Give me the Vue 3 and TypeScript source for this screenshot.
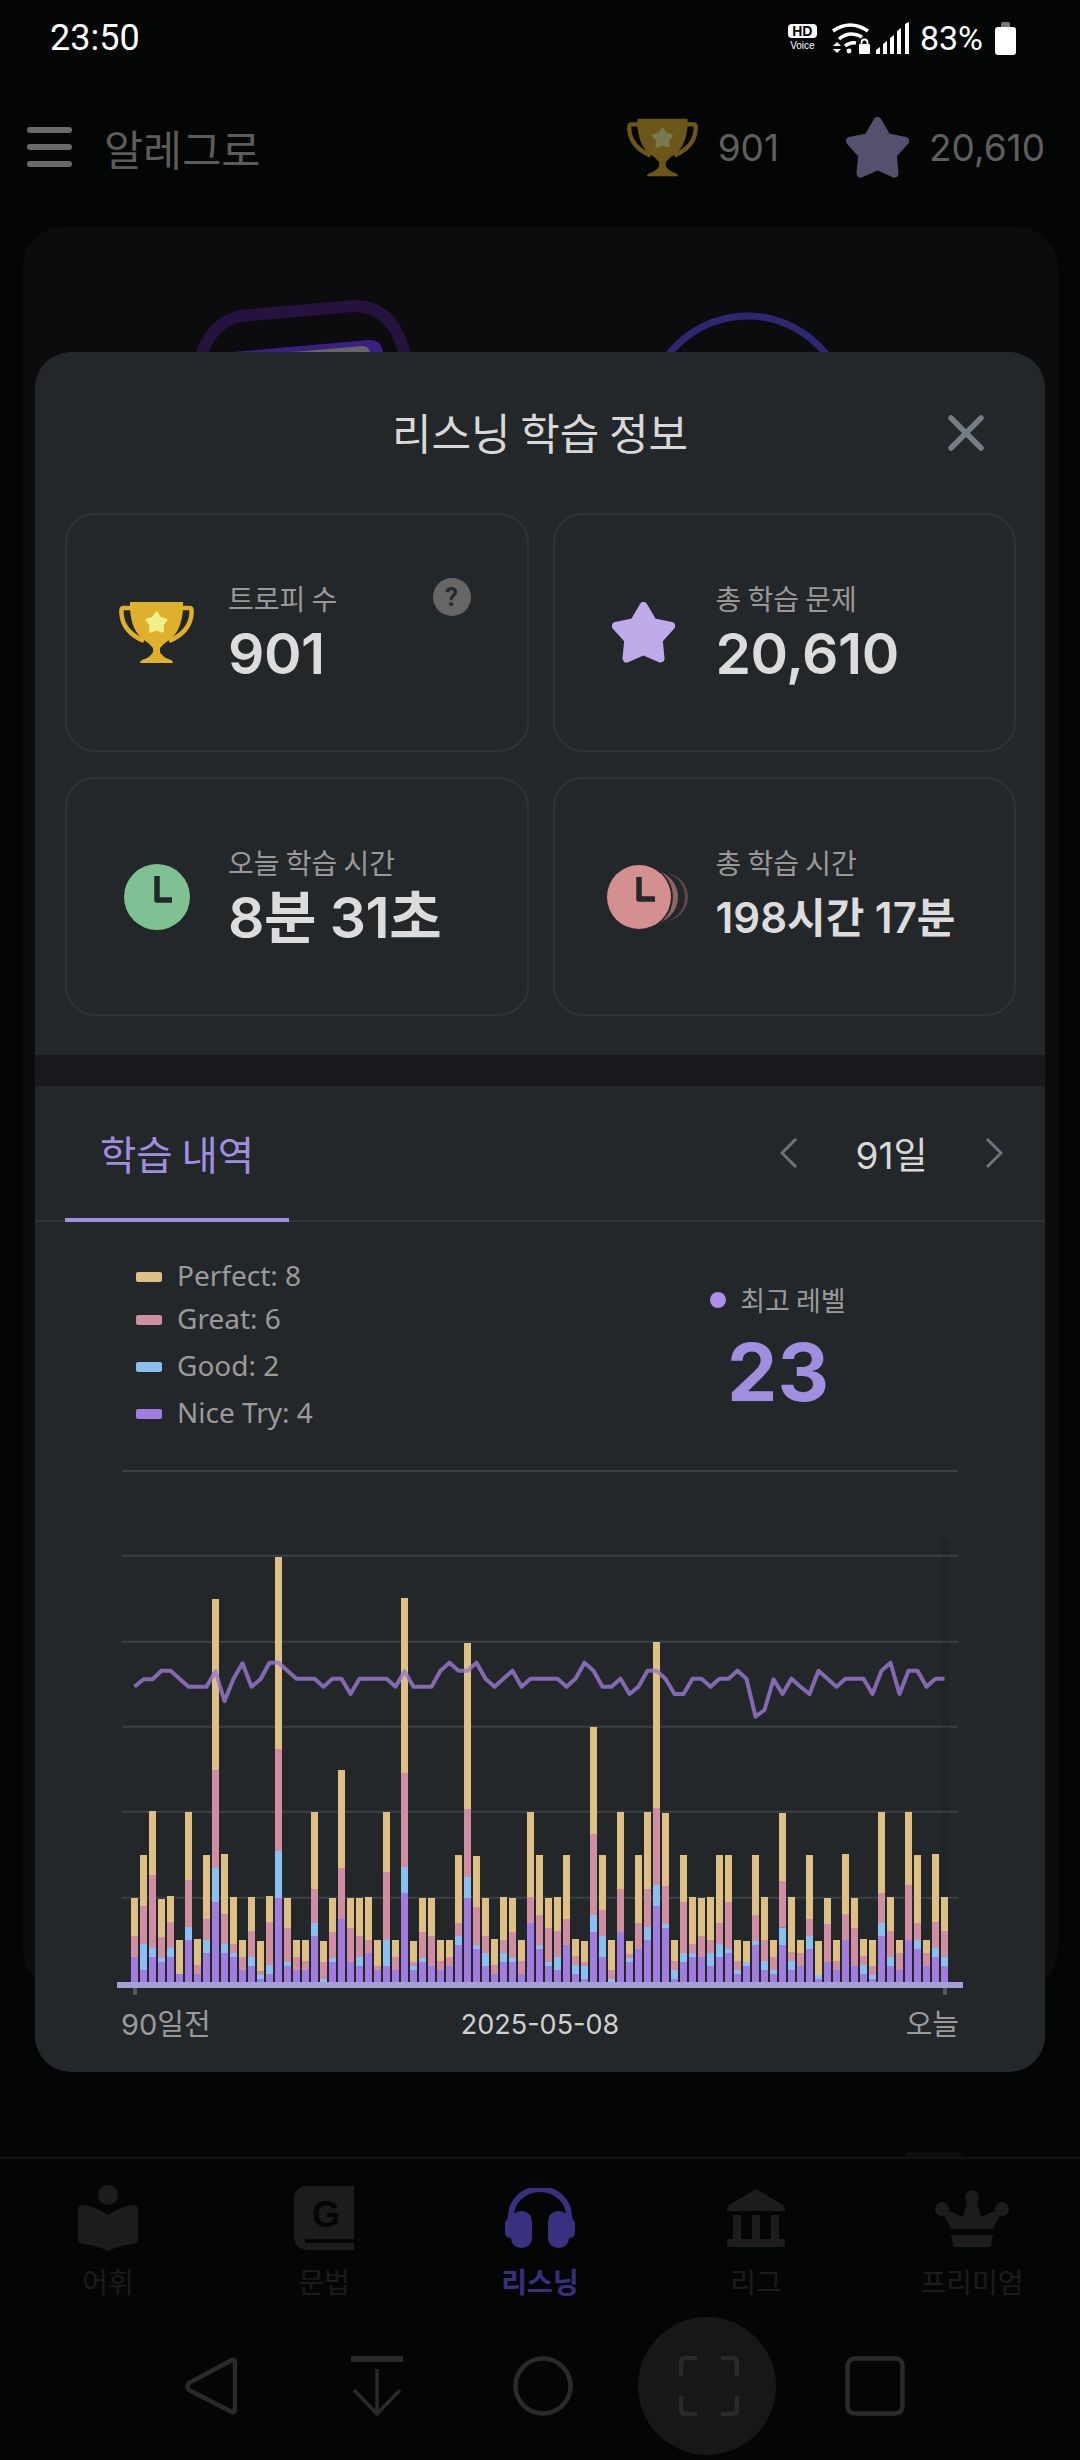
<script setup lang="ts">
interface Stat {
  label: string
  value: string
  icon: 'trophy' | 'star' | 'clock' | 'clocks'
  small?: boolean
  help?: boolean
}

const stats: Stat[] = [
  { label: '트로피 수', value: '901', icon: 'trophy', help: true },
  { label: '총 학습 문제', value: '20,610', icon: 'star' },
  { label: '오늘 학습 시간', value: '8분 31초', icon: 'clock' },
  { label: '총 학습 시간', value: '198시간 17분', icon: 'clocks', small: true },
]

const legend = [
  { name: 'Perfect: 8', color: '#dfc084' },
  { name: 'Great: 6', color: '#cf8ea2' },
  { name: 'Good: 2', color: '#8abff2' },
  { name: 'Nice Try: 4', color: '#a07ddf' },
]

const navItems = ['어휘', '문법', '리스닝', '리그', '프리미엄']

// stack tops per day, in 1/3 px from the top of the chart: yellow, pink, blue, purple
const days: number[][] = [
  [1074, 1188, 1251, 1251], [945, 1098, 1212, 1290], [813, 1005, 1224, 1251], [1077, 1191, 1254, 1266],
  [1068, 1146, 1224, 1251], [1200, 1302, 1302, 1302], [816, 1020, 1161, 1200], [1197, 1275, 1302, 1302],
  [945, 1137, 1200, 1239], [177, 690, 984, 1086], [942, 1122, 1212, 1239], [1071, 1212, 1239, 1251],
  [1200, 1251, 1290, 1290], [1071, 1173, 1251, 1278], [1203, 1293, 1305, 1317], [1068, 1146, 1275, 1302],
  [51, 627, 933, 1074], [1074, 1164, 1266, 1278], [1200, 1251, 1290, 1290], [1200, 1263, 1290, 1290],
  [816, 1047, 1149, 1188], [1203, 1266, 1317, 1326], [1074, 1176, 1254, 1266], [690, 984, 1137, 1137],
  [1074, 1164, 1266, 1266], [1074, 1188, 1251, 1278], [1071, 1200, 1239, 1239], [1200, 1278, 1290, 1290],
  [816, 996, 1200, 1278], [1200, 1251, 1290, 1290], [174, 699, 981, 1059], [1203, 1266, 1278, 1290],
  [1074, 1176, 1254, 1266], [1074, 1188, 1278, 1278], [1200, 1263, 1290, 1290], [1200, 1251, 1278, 1278],
  [945, 1149, 1188, 1215], [309, 807, 1011, 1074], [948, 1101, 1215, 1227], [1074, 1188, 1239, 1278],
  [1197, 1275, 1302, 1302], [1071, 1200, 1239, 1266], [1074, 1176, 1254, 1266], [1200, 1263, 1302, 1302],
  [816, 1071, 1149, 1149], [945, 1125, 1215, 1227], [1074, 1164, 1266, 1278], [1071, 1173, 1251, 1290],
  [945, 1137, 1215, 1215], [1197, 1248, 1275, 1302], [1203, 1266, 1278, 1317], [561, 882, 1125, 1176],
  [945, 1110, 1188, 1251], [1200, 1290, 1317, 1326], [816, 1047, 1176, 1176], [1203, 1242, 1254, 1266],
  [945, 1149, 1227, 1227], [816, 1047, 1161, 1200], [306, 804, 1035, 1098], [819, 1038, 1152, 1164],
  [1200, 1263, 1290, 1317], [945, 1086, 1239, 1266], [1071, 1212, 1239, 1251], [1074, 1188, 1251, 1251],
  [1071, 1200, 1239, 1278], [945, 1149, 1212, 1251], [945, 1086, 1227, 1239], [1200, 1263, 1290, 1302],
  [1203, 1266, 1266, 1278], [945, 1125, 1203, 1215], [1071, 1200, 1263, 1290], [1200, 1251, 1290, 1302],
  [819, 1023, 1163, 1215], [1071, 1236, 1263, 1290], [1200, 1239, 1278, 1278], [945, 1137, 1188, 1227],
  [1203, 1305, 1305, 1317], [1074, 1152, 1266, 1266], [1200, 1263, 1290, 1290], [942, 1122, 1200, 1200],
  [1074, 1164, 1278, 1278], [1197, 1248, 1275, 1302], [1200, 1278, 1305, 1317], [816, 1059, 1149, 1188],
  [1071, 1173, 1251, 1278], [1200, 1239, 1290, 1290], [816, 1035, 1200, 1200], [945, 1149, 1200, 1227],
  [1200, 1239, 1278, 1278], [942, 1146, 1224, 1251], [1071, 1173, 1251, 1278],
]

const levels = [
  440, 418, 418, 392, 392, 416, 440, 440, 440, 394, 484, 416, 370, 440, 418, 368, 368, 392, 416, 416, 416, 440, 416,
  416, 462, 416, 416, 416, 416, 440, 394, 440, 440, 440, 392, 368, 392, 392, 368, 416, 440, 416, 392, 440, 416, 416,
  416, 416, 440, 416, 368, 392, 440, 440, 416, 462, 440, 392, 392, 416, 462, 462, 416, 416, 440, 416, 416, 392, 416,
  530, 510, 418, 462, 416, 440, 462, 392, 416, 440, 416, 416, 416, 462, 392, 368, 462, 392, 392, 440, 416, 416,
]

const BASE = 1326
const stackColors = ['#dfc084', '#cf8ea2', '#8abff2', '#a07ddf']
const gridLines = [-69, 15.7, 101.7, 186.7, 271.7, 357.7]

const segments = days.flatMap((tops, i) =>
  tops.map((top, s) => {
    const bottom = s < 3 ? tops[s + 1] : BASE
    return { x: 96 + 9 * i, y: top / 3, h: (bottom - top) / 3, fill: stackColors[s] }
  }),
)

const levelLine = levels.map((v, i) => `${99.5 + 9 * i},${(v / 3).toFixed(1)}`).join(' ')

function starPoints(cx: number, cy: number, outer: number, inner: number): string {
  const pts: string[] = []
  for (let i = 0; i < 10; i++) {
    const r = i % 2 === 0 ? outer : inner
    const a = (Math.PI / 5) * i - Math.PI / 2
    pts.push(`${(cx + r * Math.cos(a)).toFixed(1)},${(cy + r * Math.sin(a)).toFixed(1)}`)
  }
  return pts.join(' ')
}

const bigStar = starPoints(31.5, 33, 29, 16)
const smallStar = starPoints(37.5, 21, 10, 5.8)
</script>

<template>
  <div class="page">
    <div class="status-bar">
      <span class="time">23:50</span>
      <div class="status-right">
        <div class="hd">
          <span class="hd-box">HD</span>
          <span class="hd-voice">Voice</span>
        </div>
        <svg class="wifi" width="40" height="32" viewBox="0 0 40 32">
          <path d="M2 9 Q19 -3 37 9" fill="none" stroke="#fff" stroke-width="3.5" />
          <path d="M8 17 Q19 8 31 15" fill="none" stroke="#fff" stroke-width="3.5" />
          <path d="M14 24 Q19 20 25 21" fill="none" stroke="#fff" stroke-width="3.5" />
          <circle cx="18" cy="29" r="2.4" fill="#fff" />
          <path d="M2 24 L6 20 L10 24 Z M2 27 H10 L6 31 Z" fill="#fff" />
          <rect x="28" y="22" width="11" height="10" rx="1" fill="#fff" />
          <path d="M30.5 23 V20.5 a3 3 0 0 1 6 0 V23" fill="none" stroke="#fff" stroke-width="1.8" />
        </svg>
        <svg class="signal" width="34" height="32" viewBox="0 0 34 32">
          <path d="M0 32 V28 L4 25 V32 Z M7 32 V22 L11 19 V32 Z M14 32 V16 L18 13 V32 Z M21 32 V9 L25 6 V32 Z M29 32 V2 L33 0 V32 Z" fill="#fff" />
        </svg>
        <span class="battery-text">83%</span>
        <div class="battery"><span class="battery-cap"></span><span class="battery-body"></span></div>
      </div>
    </div>

    <header class="app-header">
      <div class="burger"><span></span><span></span><span></span></div>
      <span class="app-title">알레그로</span>
      <div class="header-stats">
        <svg width="71" height="59" viewBox="0 0 75 61" class="dim-icon">
          <path d="M12 6 H4 Q2 6 2.5 12 Q4 30 25 39 M63 6 H71 Q73 6 72.5 12 Q71 30 50 39" fill="none" stroke="#6d561a" stroke-width="4.5" />
          <path d="M11 0 H64 V8 Q62 30 50 38 Q44 42 41 46 V50 Q43 55 52 58 Q54 59 54 61 H21 Q21 59 23 58 Q32 55 34 50 V46 Q31 42 25 38 Q13 30 11 8 Z" fill="#6d561a" />
          <polygon :points="smallStar" fill="#767a4c" stroke="#767a4c" stroke-width="3" stroke-linejoin="round" />
        </svg>
        <span class="header-num">901</span>
        <svg class="header-star" width="63" height="61" viewBox="0 0 63 61">
          <polygon :points="bigStar" fill="#56506f" stroke="#56506f" stroke-width="8" stroke-linejoin="round" />
        </svg>
        <span class="header-num">20,610</span>
      </div>
    </header>

    <div class="back-card">
      <svg class="back-art" width="1035" height="125" viewBox="0 0 1035 125">
        <path d="M178 128 Q190 95 217 89 L330 79 Q370 78 382 128" fill="none" stroke="#25123f" stroke-width="12" />
        <path d="M210 125 L345 113 Q358 112 360 125 Z" fill="#3a1f85" />
        <path d="M270 125 L340 119 Q345 119 347 125 Z" fill="#666" />
        <path d="M646 127 A100 100 0 0 1 803 127" fill="none" stroke="#2e2670" stroke-width="7" />
      </svg>
    </div>

    <nav class="bottom-nav">
      <span class="peek"></span>
      <div v-for="(name, i) in navItems" :key="name" class="nav-item" :class="{ active: i === 2 }">
        <div class="nav-icon">
          <svg v-if="i === 0" width="60" height="66" viewBox="0 0 60 66" fill="#1c1c1c">
            <circle cx="30" cy="10" r="10" />
            <path d="M4 20 Q14 20 30 30 Q46 20 56 20 Q60 20 60 24 V55 Q60 58 56 59 Q42 60 30 66 Q18 60 4 59 Q0 58 0 55 V24 Q0 20 4 20 Z" />
          </svg>
          <svg v-else-if="i === 1" width="60" height="64" viewBox="0 0 60 64">
            <path d="M14 0 H60 V64 H16 Q0 64 0 50 V14 Q0 0 14 0 Z" fill="#1c1c1c" />
            <path d="M11 55 H60" stroke="#050505" stroke-width="3.5" />
            <text x="32" y="41" text-anchor="middle" class="g-letter">G</text>
          </svg>
          <svg v-else-if="i === 2" width="70" height="60" viewBox="0 0 70 60" fill="#3a3080">
            <path d="M6 34 V28 A29 27 0 0 1 64 28 V34" fill="none" stroke="#3a3080" stroke-width="6" />
            <rect x="6" y="23" width="21" height="37" rx="10" />
            <rect x="43" y="23" width="21" height="37" rx="10" />
            <rect x="0" y="30" width="10" height="20" rx="5" />
            <rect x="60" y="30" width="10" height="20" rx="5" />
          </svg>
          <svg v-else-if="i === 3" width="58" height="58" viewBox="0 0 58 58" fill="#1c1c1c">
            <path d="M29 0 L56 16 Q58 18 58 20 V22 H0 V20 Q0 18 2 16 Z" />
            <rect x="6" y="26" width="8" height="24" />
            <rect x="25" y="26" width="8" height="24" />
            <rect x="44" y="26" width="8" height="24" />
            <rect x="0" y="50" width="58" height="8" rx="2" />
          </svg>
          <svg v-else width="74" height="58" viewBox="0 0 74 58" fill="#1c1c1c">
            <circle cx="37" cy="8" r="7" />
            <circle cx="7" cy="20" r="7" />
            <circle cx="67" cy="20" r="7" />
            <path d="M33 10 H41 L46 28 L60 22 L66 24 L58 40 H16 L8 24 L14 22 L28 28 Z" />
            <path d="M16 46 H58 L56 56 Q56 58 54 58 H20 Q18 58 18 56 Z" />
          </svg>
        </div>
        <span class="nav-label">{{ name }}</span>
      </div>
    </nav>

    <div class="system-nav">
      <div class="sys-item">
        <svg width="52" height="60" viewBox="0 0 52 60" fill="none" stroke="#2a2a2a" stroke-width="4.5" stroke-linejoin="round">
          <path d="M47 4 Q50 3 50 7 V53 Q50 57 47 56 L4 34 Q1 30 4 27 Z" />
        </svg>
      </div>
      <div class="sys-item">
        <svg width="52" height="60" viewBox="0 0 52 60" fill="none" stroke="#2a2a2a" stroke-width="3.5">
          <path d="M1 3 H51" stroke-width="6" stroke-linecap="round" />
          <path d="M26 13 V58 M3 34 L26 58 L49 34" />
        </svg>
      </div>
      <div class="sys-item">
        <svg width="60" height="60" viewBox="0 0 60 60" fill="none" stroke="#2a2a2a" stroke-width="4.5">
          <circle cx="30" cy="30" r="27.5" />
        </svg>
      </div>
      <div class="sys-item">
        <div class="capture">
          <svg width="60" height="60" viewBox="0 0 60 60" fill="none" stroke="#2a2a2a" stroke-width="4.5">
            <path d="M2 20 V7 Q2 2 7 2 H18 M42 2 H53 Q58 2 58 7 V20 M58 40 V53 Q58 58 53 58 H42 M18 58 H7 Q2 58 2 53 V40" />
          </svg>
        </div>
      </div>
      <div class="sys-item">
        <svg width="60" height="60" viewBox="0 0 60 60" fill="none" stroke="#2a2a2a" stroke-width="4.5">
          <rect x="2.5" y="2.5" width="55" height="55" rx="7" />
        </svg>
      </div>
    </div>

    <section class="modal">
      <div class="modal-head">
        <span></span>
        <h2 class="modal-title">리스닝 학습 정보</h2>
        <svg class="close" width="36" height="36" viewBox="0 0 36 36" stroke="#767d84" stroke-width="5.5" stroke-linecap="round">
          <path d="M3 3 L33 33 M33 3 L3 33" />
        </svg>
      </div>

      <div class="stat-grid">
        <div v-for="s in stats" :key="s.label" class="stat-card">
          <div class="stat-icon">
            <svg v-if="s.icon === 'trophy'" width="75" height="61" viewBox="0 0 75 61">
              <path d="M12 6 H4 Q2 6 2.5 12 Q4 30 25 39 M63 6 H71 Q73 6 72.5 12 Q71 30 50 39" fill="none" stroke="#deb02c" stroke-width="4.5" />
              <path d="M11 0 H64 V8 Q62 30 50 38 Q44 42 41 46 V50 Q43 55 52 58 Q54 59 54 61 H21 Q21 59 23 58 Q32 55 34 50 V46 Q31 42 25 38 Q13 30 11 8 Z" fill="#deb02c" />
              <polygon :points="smallStar" fill="#f3f08c" stroke="#f3f08c" stroke-width="3" stroke-linejoin="round" />
            </svg>
            <svg v-else-if="s.icon === 'star'" width="63" height="61" viewBox="0 0 63 61">
              <polygon :points="bigStar" fill="#bfaaea" stroke="#bfaaea" stroke-width="8" stroke-linejoin="round" />
            </svg>
            <svg v-else-if="s.icon === 'clock'" class="clock" width="66" height="66" viewBox="0 0 66 66">
              <circle cx="33" cy="33" r="33" fill="#7fc193" />
              <path d="M33 12 V36 H48" fill="none" stroke="#24272a" stroke-width="5.5" stroke-linejoin="round" />
            </svg>
            <svg v-else class="clocks" width="81" height="64" viewBox="0 0 81 64">
              <circle cx="57" cy="32" r="24" fill="#5f4748" />
              <circle cx="53" cy="32" r="25" fill="#24272a" />
              <circle cx="44" cy="32" r="27" fill="#8f6667" />
              <circle cx="33" cy="32" r="33" fill="#24272a" />
              <circle cx="32" cy="32" r="32" fill="#d48f90" />
              <path d="M32 12 V34 H48" fill="none" stroke="#24272a" stroke-width="5.5" stroke-linejoin="round" />
            </svg>
          </div>
          <div class="stat-text">
            <div class="stat-label">{{ s.label }}</div>
            <div class="stat-value" :class="{ small: s.small }">{{ s.value }}</div>
          </div>
          <span v-if="s.help" class="help">?</span>
        </div>
      </div>

      <div class="band"></div>

      <div class="tabs">
        <div class="tab">학습 내역</div>
        <div class="range">
          <svg width="18" height="30" viewBox="0 0 18 30" fill="none" stroke="#6b747c" stroke-width="3"><path d="M16 1 L2 15 L16 29" /></svg>
          <span class="range-text">91일</span>
          <svg width="18" height="30" viewBox="0 0 18 30" fill="none" stroke="#6b747c" stroke-width="3"><path d="M2 1 L16 15 L2 29" /></svg>
        </div>
      </div>

      <div class="summary">
        <div class="legend">
          <div v-for="l in legend" :key="l.name" class="legend-row">
            <span class="swatch" :style="{ background: l.color }"></span>
            <span class="legend-name">{{ l.name }}</span>
          </div>
        </div>
        <div class="level">
          <div class="level-label"><span class="dot"></span>최고 레벨</div>
          <div class="level-value">23</div>
        </div>
      </div>

      <svg class="chart" width="1010" height="540" viewBox="0 -80 1010 540">
        <line v-for="y in gridLines" :key="y" x1="87" x2="923" :y1="y" :y2="y" stroke="#3c4044" stroke-width="2" />
        <rect x="906" y="0" width="8" height="442" fill="#000" opacity="0.1" />
        <rect v-for="(s, i) in segments" :key="i" :x="s.x" :y="s.y" width="7" :height="s.h" :fill="s.fill" />
        <rect x="82" y="442" width="846" height="6" fill="#a59fd6" />
        <rect x="98" y="448" width="4" height="7" fill="#555" />
        <rect x="908" y="448" width="4" height="7" fill="#555" />
        <polyline :points="levelLine" fill="none" stroke="#9878d0" stroke-opacity="0.82" stroke-width="4" stroke-linejoin="round" />
      </svg>

      <div class="axis-labels">
        <span>90일전</span>
        <span class="axis-date">2025-05-08</span>
        <span class="axis-end">오늘</span>
      </div>
    </section>
  </div>
</template>

<style scoped>
.page {
  position: relative;
  width: 1080px;
  height: 2460px;
  overflow: hidden;
  display: flex;
  flex-direction: column;
  background: #040606;
  font-family: "Noto Sans CJK KR", sans-serif;
}

.status-bar {
  height: 76px;
  display: flex;
  align-items: center;
  justify-content: space-between;
  padding: 0 64px 0 50px;
  box-sizing: border-box;
  flex: none;
  color: #fff;
  font-family: Roboto, sans-serif;
}

.time {
  font-size: 36px;
}

.status-right {
  display: flex;
  align-items: center;
}

.hd {
  width: 29px;
  display: flex;
  flex-direction: column;
  align-items: center;
}

.hd-box {
  width: 29px;
  height: 14px;
  border-radius: 4px;
  background: #fff;
  color: #000;
  font: 700 14px/14px "Liberation Sans", sans-serif;
  text-align: center;
}

.hd-voice {
  font: 400 10px/13px "Liberation Sans", sans-serif;
  margin-top: 1px;
}

.wifi {
  margin-left: 14px;
}

.signal {
  margin-left: 5px;
}

.battery-text {
  font-size: 34px;
  margin-left: 10px;
}

.battery {
  margin-left: 12px;
  width: 21px;
  display: flex;
  flex-direction: column;
  align-items: center;
}

.battery-cap {
  width: 9px;
  height: 5px;
  background: #777;
  border-radius: 2px 2px 0 0;
}

.battery-body {
  width: 21px;
  height: 28px;
  background: #fff;
  border-radius: 3px;
}

.app-header {
  height: 142px;
  flex: none;
  display: flex;
  align-items: center;
  padding: 0 35px 0 27px;
  box-sizing: border-box;
}

.burger {
  display: flex;
  flex-direction: column;
  gap: 11px;
}

.burger span {
  display: block;
  width: 45px;
  height: 6px;
  border-radius: 3px;
  background: #6b6b6b;
}

.app-title {
  margin-left: 32px;
  font-size: 42.5px;
  color: #5c5c5c;
}

.header-stats {
  margin-left: auto;
  display: flex;
  align-items: center;
}

.header-num {
  margin-left: 20px;
  font-family: Inter, sans-serif;
  font-size: 37px;
  color: #5f5f5f;
}

.header-star {
  margin-left: 67px;
}

.back-card {
  flex: none;
  height: 1763px;
  margin: 9px 22px 0 23px;
  border-radius: 40px;
  background: #0c0b0d;
}

.back-art {
  display: block;
}

.bottom-nav {
  position: relative;
  flex: none;
  margin-top: auto;
  height: 141px;
  display: grid;
  grid-template-columns: repeat(5, 1fr);
  border-top: 2px solid #101313;
  box-sizing: border-box;
}

.peek {
  position: absolute;
  top: -7px;
  left: 905px;
  width: 57px;
  height: 5px;
  border-radius: 28px 28px 0 0;
  background: #0e0e0e;
}

.nav-item {
  display: flex;
  flex-direction: column;
  align-items: center;
  color: #1b1c1d;
}

.nav-icon {
  height: 66px;
  margin-top: 26px;
  display: flex;
  align-items: center;
  justify-content: center;
}

.nav-label {
  margin-top: 13px;
  font-size: 28px;
  line-height: 34px;
}

.nav-item.active {
  color: #3a3080;
  font-weight: 700;
}

.g-letter {
  font: 700 36px "Liberation Sans", sans-serif;
  fill: #050505;
}

.system-nav {
  flex: none;
  height: 162px;
  display: flex;
  justify-content: center;
  padding-left: 6px;
  box-sizing: border-box;
}

.sys-item {
  width: 166px;
  height: 176px;
  display: flex;
  align-items: center;
  justify-content: center;
}

.capture {
  width: 134px;
  height: 138px;
  margin-left: -4px;
  padding-left: 4px;
  border-radius: 50%;
  background: #171717;
  display: flex;
  align-items: center;
  justify-content: center;
}

/* modal sits over the dimmed screen */
.modal {
  position: absolute;
  top: 352px;
  left: 35px;
  width: 1010px;
  height: 1720px;
  border-radius: 36px;
  background: #24272a;
}

.modal-head {
  height: 161px;
  display: grid;
  grid-template-columns: 1fr auto 1fr;
  align-items: center;
}

.modal-title {
  margin: 0;
  padding-bottom: 4px;
  font-size: 43px;
  font-weight: 400;
  line-height: 54px;
  color: #d8d8d8;
}

.close {
  justify-self: end;
  margin-right: 61px;
}

.stat-grid {
  display: grid;
  grid-template-columns: 1fr 1fr;
  grid-auto-rows: 239px;
  gap: 25px 24px;
  padding: 0 29px 0 30px;
}

.stat-card {
  position: relative;
  display: flex;
  align-items: center;
  box-sizing: border-box;
  border: 2px solid #2f3236;
  border-radius: 30px;
}

.stat-icon {
  width: 144px;
  margin-left: 17px;
  flex: none;
  display: flex;
  justify-content: center;
}

.clock {
  margin-left: 2px;
}

.clocks {
  margin-left: 7px;
}

.stat-label {
  font-size: 28px;
  line-height: 40px;
  color: #999;
}

.stat-value {
  margin-top: 2px;
  font-family: Inter, "Noto Sans CJK KR", sans-serif;
  font-size: 57px;
  font-weight: 600;
  line-height: 68px;
  letter-spacing: -0.5px;
  color: #dcdcdc;
}

.stat-value.small {
  font-size: 42px;
  letter-spacing: 0;
}

.help {
  position: absolute;
  top: 63px;
  right: 56px;
  width: 38px;
  height: 38px;
  border-radius: 50%;
  background: #666;
  color: #26292c;
  font: 700 26px/38px Roboto, sans-serif;
  text-align: center;
}

.band {
  margin-top: 39px;
  height: 31px;
  background: #18191c;
}

.tabs {
  height: 136px;
  box-sizing: border-box;
  display: flex;
  justify-content: space-between;
  align-items: stretch;
  border-bottom: 2px solid #303337;
}

.tab {
  margin-left: 30px;
  width: 224px;
  height: 136px;
  box-sizing: border-box;
  border-bottom: 4px solid #a18fe0;
  display: flex;
  align-items: center;
  justify-content: center;
  font-size: 39.5px;
  color: #a08fe0;
}

.range {
  display: flex;
  align-items: center;
  padding-right: 42px;
}

.range-text {
  width: 187px;
  text-align: center;
  font-family: Inter, "Noto Sans CJK KR", sans-serif;
  font-size: 37px;
  color: #d8d8d8;
}

.summary {
  display: flex;
  padding: 31px 0 0 101px;
}

.legend {
  width: 562px;
  font-family: "Noto Sans", sans-serif;
  font-size: 28px;
  color: #9a9a9a;
}

.legend-row {
  height: 47px;
  display: flex;
  align-items: center;
  gap: 16px;
}

.legend-row:first-child {
  margin-bottom: -4px;
}

.legend-name {
  margin-top: -4px;
  margin-left: -1px;
}

.swatch {
  width: 26px;
  height: 10px;
  border-radius: 2px;
}

.level {
  width: 160px;
  margin-top: 27px;
  text-align: center;
}

.level-label {
  display: flex;
  align-items: center;
  justify-content: center;
  gap: 14px;
  font-size: 27px;
  line-height: 40px;
  color: #9a9a9a;
}

.dot {
  width: 16px;
  height: 16px;
  border-radius: 50%;
  background: #ab8eea;
}

.level-value {
  margin-top: 7px;
  font-family: Inter, sans-serif;
  font-size: 80px;
  font-weight: 700;
  line-height: 90px;
  color: #a08fe0;
}

.chart {
  display: block;
  margin-top: 23px;
}

.axis-labels {
  margin: 5px 0 0 86px;
  width: 838px;
  display: grid;
  grid-template-columns: 1fr auto 1fr;
  align-items: center;
  font-family: Inter, "Noto Sans CJK KR", sans-serif;
  font-size: 29px;
  line-height: 40px;
  color: #9a9a9a;
}

.axis-date {
  font-size: 27px;
  color: #d0d0d0;
}

.axis-end {
  text-align: right;
}
</style>

<style>
html,
body {
  margin: 0;
  background: #040606;
}
</style>
